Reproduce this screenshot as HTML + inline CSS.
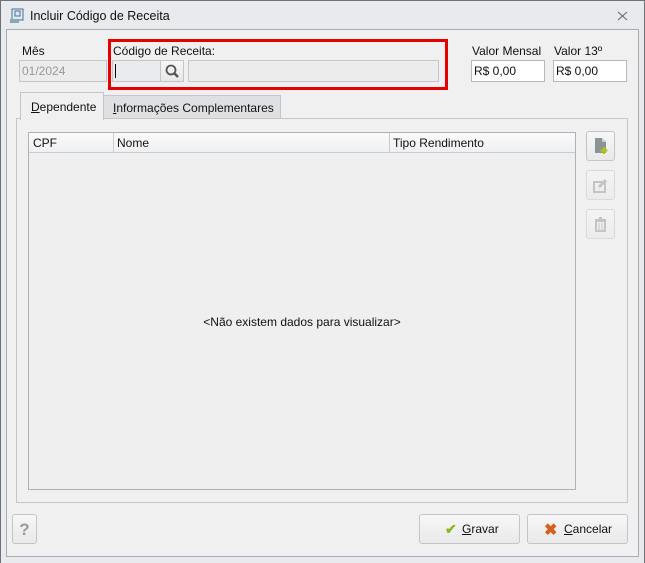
<!DOCTYPE html>
<html><head><meta charset="utf-8"><style>
*{box-sizing:border-box}
body{margin:0;width:645px;height:563px;background:#e8eaed;font-family:"Liberation Sans",sans-serif;font-size:12px;color:#111;position:relative;overflow:hidden}
.a{position:absolute}
.win{left:0;top:0;width:645px;height:563px;border:1px solid #6d7277;border-bottom:none}
.panel{left:6px;top:29px;width:633px;height:528px;background:#f0f0f0;border:1px solid #a9adb2}
.inp{background:#fff;border:1px solid #b5b9bd;height:22px;padding:3px 2px;font-size:12px}
.dis{background:#ececec;border:1px solid #c4c6c8;color:#999}
.btn{border:1px solid #c2c5c9;border-radius:3px;background:linear-gradient(#f7f7f7,#e9e9e9)}
</style></head><body>
<div class="a win"></div>
<svg class="a" style="left:9px;top:8px" width="16" height="16"><rect x="3" y="1" width="11" height="11" fill="#dfe9f3" stroke="#4a6f95"/><rect x="6" y="3" width="5" height="5" fill="none" stroke="#4a6f95"/><rect x="1" y="11" width="9" height="4" fill="#8aa" /></svg>
<div class="a" style="left:30px;top:9px;font-size:12.5px">Incluir Código de Receita</div>
<svg class="a" style="left:617px;top:11px" width="12" height="10"><path d="M1 1l9 8M10 1l-9 8" stroke="#666" stroke-width="1"/></svg>
<div class="a panel"></div>
<div class="a" style="left:22px;top:44px">Mês</div>
<div class="a inp dis" style="left:19px;top:60px;width:88px">01/2024</div>
<div class="a" style="left:108px;top:39px;width:340px;height:51px;border:3px solid #e60000"></div>
<div class="a" style="left:113px;top:44px">Código de Receita:</div>
<div class="a inp" style="left:112px;top:60px;width:49px;background:#e9ebee;border-color:#c4c6c8"><span style="display:inline-block;width:1px;height:14px;background:#000"></span></div>
<div class="a btn" style="left:160px;top:60px;width:24px;height:22px;border-radius:0"><svg width="22" height="20"><circle cx="10" cy="9" r="4.5" fill="none" stroke="#555" stroke-width="1.8"/><path d="M13 12l4 4" stroke="#555" stroke-width="2.5"/></svg></div>
<div class="a inp" style="left:188px;top:60px;width:251px;background:#ececec;border-color:#c4c6c8"></div>
<div class="a" style="left:472px;top:44px">Valor Mensal</div>
<div class="a inp" style="left:471px;top:60px;width:74px">R$ 0,00</div>
<div class="a" style="left:554px;top:44px">Valor 13º</div>
<div class="a inp" style="left:553px;top:60px;width:74px">R$ 0,00</div>
<div class="a" style="left:16px;top:118px;width:612px;height:385px;border:1px solid #c4c6c9;background:#f0f0f0"></div>
<div class="a" style="left:103px;top:95px;width:178px;height:24px;border:1px solid #c4c6c9;background:#dfe0e2;padding:5px 0 0 9px"><u>I</u>nformações Complementares</div>
<div class="a" style="left:20px;top:92px;width:84px;height:28px;border:1px solid #c4c6c9;border-bottom:none;background:#f0f0f0;padding:7px 0 0 10px"><u>D</u>ependente</div>
<div class="a" style="left:28px;top:132px;width:548px;height:358px;border:1px solid #aeb2b6;background:#efefef"></div>
<div class="a" style="left:29px;top:133px;width:546px;height:20px;border-bottom:1px solid #c9cbce;background:linear-gradient(#fafafa,#eef0f2)"></div>
<div class="a" style="left:113px;top:133px;width:1px;height:19px;background:#c9cbce"></div>
<div class="a" style="left:389px;top:133px;width:1px;height:19px;background:#c9cbce"></div>
<div class="a" style="left:33px;top:136px">CPF</div>
<div class="a" style="left:117px;top:136px">Nome</div>
<div class="a" style="left:393px;top:136px">Tipo Rendimento</div>
<div class="a" style="left:29px;top:315px;width:546px;text-align:center">&lt;Não existem dados para visualizar&gt;</div>
<div class="a btn" style="left:586px;top:131px;width:29px;height:30px"><svg width="27" height="28"><path d="M8 6h7l4 4v11h-11z" fill="#8c9397"/><path d="M15 6v4h4" fill="#ccc"/><path d="M17 15v7M13.5 18.5h7" stroke="#b5c800" stroke-width="2"/></svg></div>
<div class="a btn" style="left:586px;top:170px;width:29px;height:30px;opacity:.5"><svg width="27" height="28"><rect x="7" y="11" width="11" height="10" fill="none" stroke="#999" stroke-width="2"/><path d="M12 16l7-7" stroke="#999" stroke-width="3"/></svg></div>
<div class="a btn" style="left:586px;top:209px;width:29px;height:30px;opacity:.5"><svg width="27" height="28"><path d="M8 10h11M12 8h3" stroke="#999" stroke-width="2"/><path d="M9 11h9v10h-9z" fill="none" stroke="#999" stroke-width="2"/><path d="M12 13v7M15 13v7" stroke="#999"/></svg></div>
<div class="a btn" style="left:12px;top:514px;width:25px;height:30px;text-align:center;padding-top:5px;font-size:17px;font-weight:bold;color:#999">?</div>
<div class="a btn" style="left:419px;top:514px;width:101px;height:30px"><span style="color:#8ab820;font-size:14px;font-weight:bold;position:absolute;left:25px;top:6px">✔</span><span style="position:absolute;left:42px;top:7px"><u>G</u>ravar</span></div>
<div class="a btn" style="left:527px;top:514px;width:101px;height:30px"><span style="color:#d9601c;font-size:16px;font-weight:bold;position:absolute;left:16px;top:5px">✖</span><span style="position:absolute;left:36px;top:7px"><u>C</u>ancelar</span></div>
</body></html>
